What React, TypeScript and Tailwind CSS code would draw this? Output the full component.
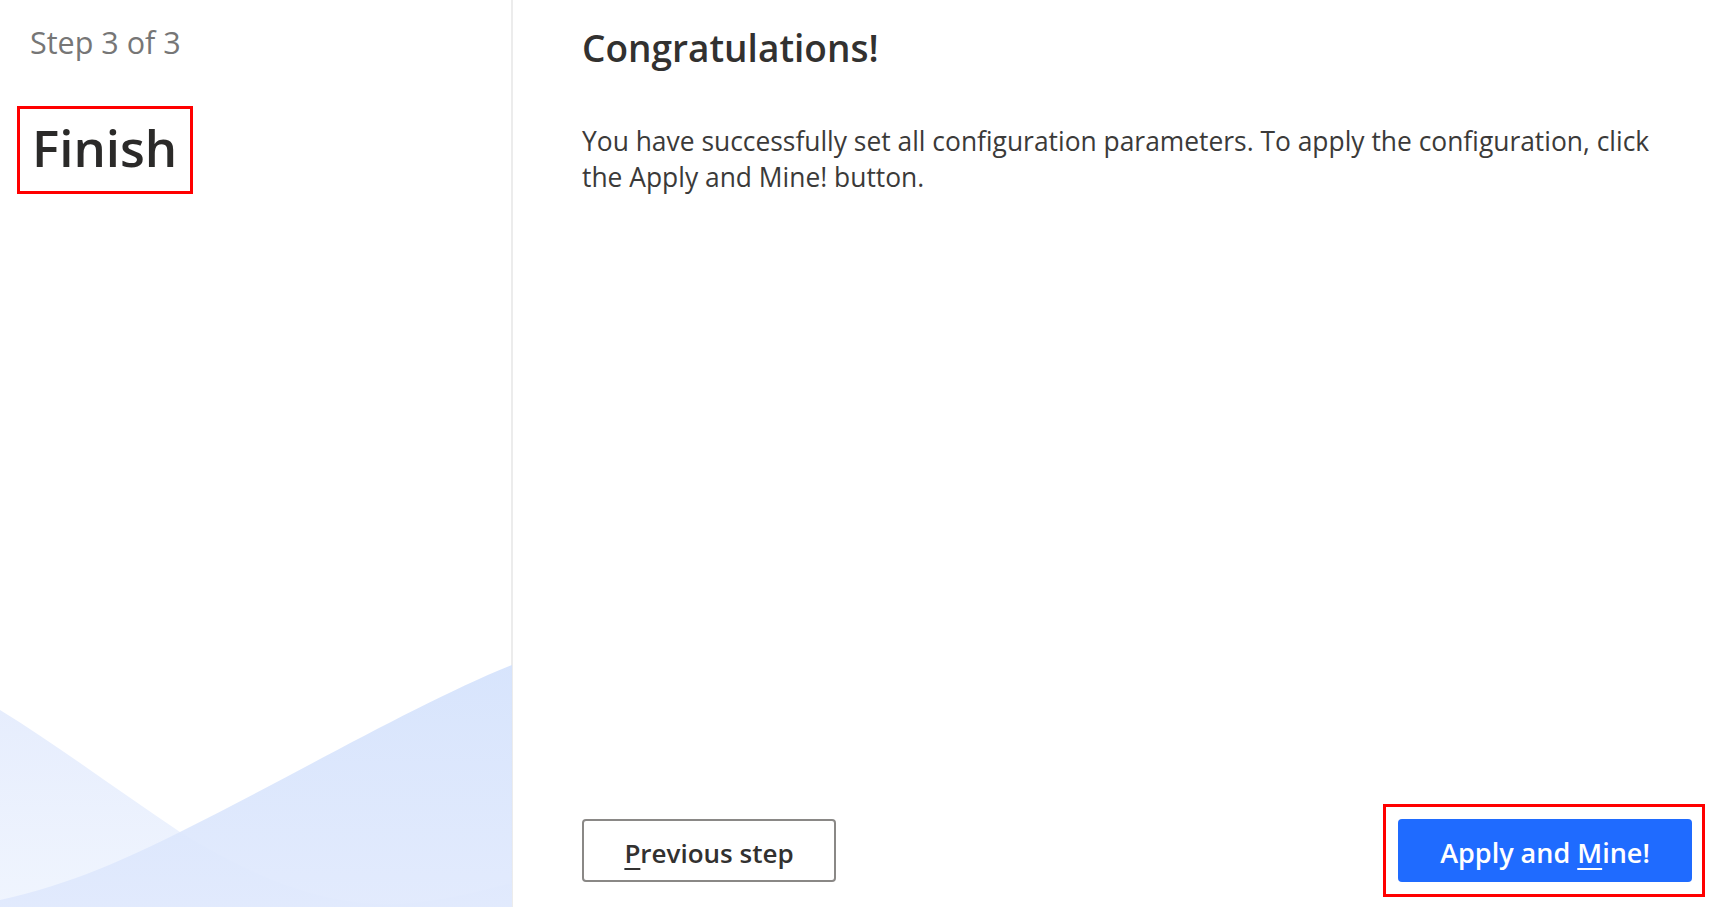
import React from "react";

const Waves: React.FC = () => (
  <svg
    className="absolute bottom-0 left-0 h-[250px] w-[512px]"
    viewBox="0 0 512 250"
    preserveAspectRatio="none"
  >
    <defs>
      <linearGradient id="waveLight" x1="0" y1="0" x2="0" y2="1">
        <stop offset="0" stopColor="#e6edfd" />
        <stop offset="1" stopColor="#f0f5fe" />
      </linearGradient>
      <linearGradient id="waveStrong" x1="0" y1="0" x2="0" y2="1">
        <stop offset="0" stopColor="#d4e2fc" />
        <stop offset="1" stopColor="#e0e9fd" />
      </linearGradient>
    </defs>
    <path
      d="M0 53 C 60 90, 120 135, 180 175 C 260 225, 330 250, 400 247 C 440 245, 480 234, 512 226 L512 250 L0 250 Z"
      fill="url(#waveLight)"
    />
    <path
      d="M0 243 C 70 228, 130 200, 180 175 C 300 115, 420 45, 512 8 L512 250 L0 250 Z"
      fill="url(#waveStrong)"
      opacity={0.92}
    />
  </svg>
);

const App: React.FC = () => {
  return (
    <div
      className="flex h-[907px] w-full overflow-hidden bg-white text-[#323130]"
      style={{ fontFamily: '"Open Sans", "Noto Sans", sans-serif' }}
    >
      {/* left rail */}
      <div className="relative w-[513px] shrink-0 border-r-2 border-[#ececec] bg-white">
        <div className="relative z-10 flex flex-col items-start pl-[30px] pt-[22px]">
          <p className="text-[30.5px] leading-[40px] text-[#767676]">Step 3 of 3</p>
          <div className="relative mt-[53px] ml-[2px]">
            <h1 className="text-[51px] font-semibold leading-[64px] text-[#2b2a29]">Finish</h1>
            <div className="pointer-events-none absolute -left-[15px] -right-[16px] -top-[9px] -bottom-[15px] border-[3px] border-[#ff0000]" />
          </div>
        </div>
        <Waves />
      </div>

      {/* content */}
      <div className="flex flex-1 flex-col pl-[69px] pr-[25px] pt-[24px] pb-[25px]">
        <h2 className="text-[37px] font-semibold leading-[48px] text-[#323130]">Congratulations!</h2>
        <p className="mt-[51px] text-[26.4px] leading-[36px] text-[#3b3a39]">
          You have successfully set all configuration parameters. To apply the configuration, click
          <br />
          the Apply and Mine! button.
        </p>

        <div className="mt-auto flex items-end justify-between">
          <button className="h-[63px] w-[254px] rounded-[4px] border-2 border-[#8a8886] bg-white pt-[5px] text-[26px] font-semibold text-[#323130]">
            <span className="underline decoration-2 underline-offset-[5px]">P</span>revious step
          </button>
          <div className="relative">
            <button className="h-[63px] w-[294px] rounded-[4px] bg-[#1f6bff] pt-[5px] text-[27px] font-semibold text-white">
              Apply and <span className="underline decoration-2 underline-offset-[5px]">M</span>ine!
            </button>
            <div className="pointer-events-none absolute -left-[15px] -right-[13px] -top-[15px] -bottom-[15px] border-[3px] border-[#ff0000]" />
          </div>
        </div>
      </div>
    </div>
  );
};

export default App;
